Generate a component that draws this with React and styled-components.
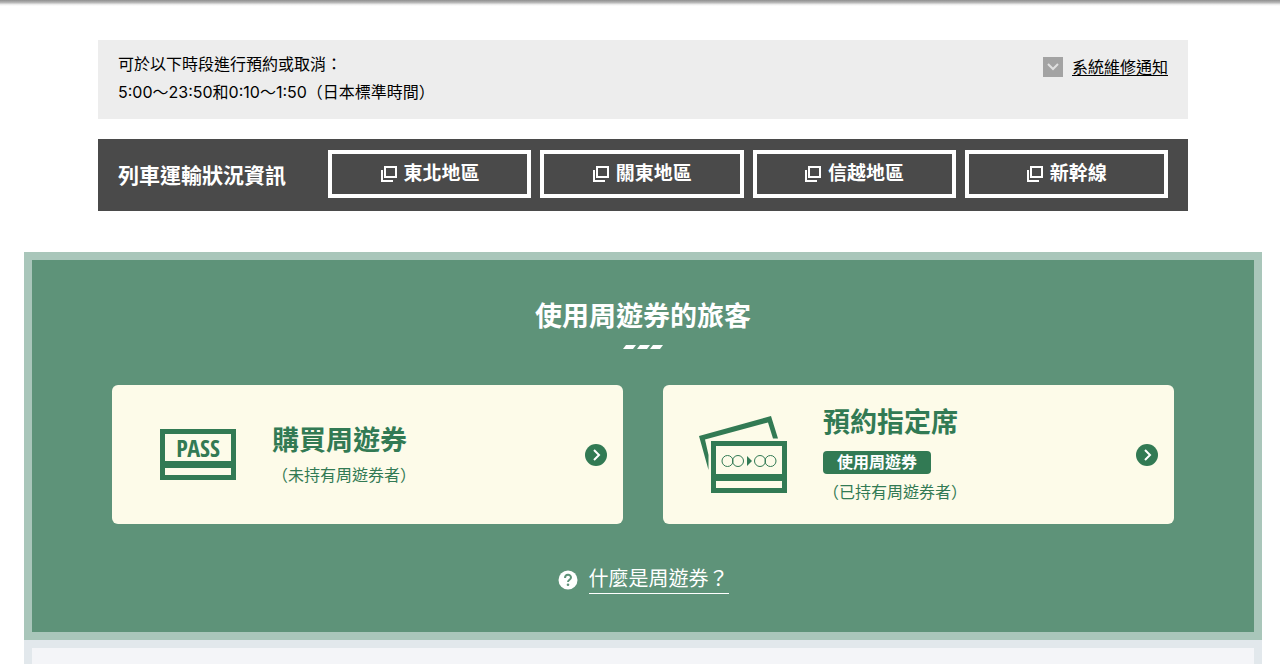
import React from 'react';
import styled, { createGlobalStyle } from 'styled-components';

const GlobalStyle = createGlobalStyle`
    * {
        box-sizing: border-box;
    }

    body {
        margin: 0;
        background: #fff;
        color: #000;
        font-family: Inter, "Noto Sans CJK TC", sans-serif;
        font-size: 16px;
        line-height: 28px;
    }

    h2, h3, p, ul {
        margin: 0;
        padding: 0;
    }

    a {
        color: inherit;
    }
`;

const HeaderShadow = styled.header`
    height: 6px;
    background: linear-gradient(#8f8f8f, #b4b4b4 40%, #ececec 75%, #fff);
`;

const Page = styled.main`
    height: calc(100vh - 6px);
    padding: 34px 18px 0 24px;
    overflow: hidden;
`;

const Notices = styled.div`
    display: flex;
    flex-direction: column;
    gap: 20px;
    max-width: 1090px;
    margin: 0 auto 41px;
`;

const HoursBox = styled.section`
    display: flex;
    justify-content: space-between;
    align-items: flex-start;
    padding: 10px 20px 13px;
    background: #ededed;
`;

const MaintenanceLink = styled.a`
    display: flex;
    align-items: center;
    gap: 9px;
    padding-top: 3px;
    text-underline-offset: 2px;
`;

const ArrowBox = styled.span`
    display: flex;
    align-items: center;
    justify-content: center;
    width: 20px;
    height: 20px;
    background: #a3a3a3;
`;

const StatusBar = styled.section`
    display: flex;
    align-items: center;
    padding: 11px 20px 13px;
    background: #4a4a4a;
    color: #fff;
`;

const StatusTitle = styled.h2`
    flex: 0 0 210px;
    padding-top: 4px;
    font-size: 21px;
    font-weight: 700;
`;

const AreaList = styled.ul`
    display: grid;
    flex: 1;
    grid-template-columns: repeat(4, 1fr);
    gap: 9px;
    list-style: none;
`;

const AreaLink = styled.a`
    display: flex;
    align-items: center;
    justify-content: center;
    gap: 6px;
    height: 48px;
    border: 4px solid #fff;
    font-size: 19px;
    font-weight: 700;
    text-decoration: none;
`;

const PassSection = styled.section`
    display: flex;
    flex-direction: column;
    align-items: center;
    padding: 37px 80px 38px;
    border: 8px solid #a9c6ba;
    background: #5e9379;
    color: #fff;
`;

const PassTitle = styled.h2`
    margin-bottom: 8px;
    font-size: 27px;
    font-weight: 700;
    line-height: 40px;
`;

const Cards = styled.div`
    display: grid;
    grid-template-columns: 1fr 1fr;
    gap: 40px;
    width: 100%;
    margin: 36px 0 41px;
`;

const Card = styled.a`
    display: flex;
    align-items: center;
    min-height: 139px;
    padding: 0 16px 0 36px;
    border-radius: 6px;
    background: #fdfbe9;
    color: #327a54;
    text-decoration: none;
`;

const CardText = styled.div`
    flex: 1;
    margin-left: 36px;
`;

const CardTitle = styled.h3`
    font-size: 27px;
    font-weight: 700;
    line-height: 40px;
`;

const CardBadge = styled.span`
    display: block;
    width: max-content;
    margin: 8px 0 4px;
    padding: 0 14px;
    border-radius: 4px;
    background: #327a54;
    color: #fff;
    font-weight: 700;
    line-height: 23px;
`;

const HelpLink = styled.a`
    display: flex;
    align-items: center;
    gap: 11px;
    font-size: 20px;
    text-decoration: none;
`;

const HelpText = styled.span`
    border-bottom: 1px solid #fff;
`;

const NextSection = styled.section`
    height: 200px;
    border: 8px solid #e2e8ec;
    background: #f4f5f8;
`;

const WindowIcon = () => (
    <svg width="18" height="18" viewBox="0 0 18 18" fill="none" stroke="#fff" strokeWidth="2" aria-hidden="true">
        <path d="M5 2H16V12H5Z" />
        <path d="M2 5V16H13" />
    </svg>
);

const Slashes = () => (
    <svg width="40" height="4" viewBox="0 0 40 4" fill="#fff" aria-hidden="true">
        <path d="M3 0H13L10 4H0ZM17 0H27L24 4H14ZM30 0H40L37 4H27Z" />
    </svg>
);

const CircleArrow = () => (
    <svg width="22" height="22" viewBox="0 0 22 22" aria-hidden="true">
        <circle cx="11" cy="11" r="11" fill="#327a54" />
        <path d="M9 6L14 11L9 16" fill="none" stroke="#fff" strokeWidth="2" />
    </svg>
);

const PassIcon = () => (
    <svg width="88" height="51" viewBox="0 0 88 51" aria-hidden="true">
        <path fill="#327a54" fillRule="evenodd" d="M12 0H88V51H12ZM17 5V32H83V5ZM17 39V46H83V39Z" />
        <text
            x="50"
            y="28"
            fill="#327a54"
            fontFamily="'Open Sans Condensed', 'Roboto Condensed', 'Liberation Sans Narrow', sans-serif"
            fontSize="24"
            fontWeight="500"
            textAnchor="middle"
        >
            PASS
        </text>
    </svg>
);

const TicketsIcon = () => (
    <svg width="88" height="78" viewBox="0 0 88 78" fill="none" stroke="#327a54" aria-hidden="true">
        <path d="M0 20L72 0L79 22.5H74L69 6.5L6 23.5L9.5 39V54Z" fill="#327a54" stroke="none" />
        <path fill="#327a54" stroke="none" fillRule="evenodd" d="M12 25H88V77H12ZM17 30V58H83V30ZM17 65V72H83V65Z" />
        <circle cx="28.5" cy="45" r="5.5" />
        <circle cx="39" cy="45" r="5.5" />
        <circle cx="61" cy="45" r="5.5" />
        <circle cx="71.5" cy="45" r="5.5" />
        <path d="M48 40V50L53 45Z" fill="#327a54" stroke="none" />
    </svg>
);

const HelpIcon = () => (
    <svg width="20" height="20" viewBox="0 0 20 20" aria-hidden="true">
        <circle cx="10" cy="10" r="9.5" fill="#fff" />
        <path d="M7 8C7 3.8 13 3.8 13 7.5C13 9.8 10 9.8 10 12" fill="none" stroke="#5e9379" strokeWidth="2" />
        <circle cx="10" cy="14.7" r="1.3" fill="#5e9379" />
    </svg>
);

const areas = ['東北地區', '關東地區', '信越地區', '新幹線'];

const App = () => (
    <>
        <GlobalStyle />
        <HeaderShadow />
        <Page>
            <Notices>
                <HoursBox>
                    <div>
                        <p>可於以下時段進行預約或取消：</p>
                        <p>5:00～23:50和0:10～1:50（日本標準時間）</p>
                    </div>
                    <MaintenanceLink href="#maintenance">
                        <ArrowBox>
                            <svg width="12" height="8" viewBox="0 0 12 8" fill="none" stroke="#e0e0e0" strokeWidth="2" aria-hidden="true">
                                <path d="M1 1L6 6L11 1" />
                            </svg>
                        </ArrowBox>
                        系統維修通知
                    </MaintenanceLink>
                </HoursBox>
                <StatusBar>
                    <StatusTitle>列車運輸狀況資訊</StatusTitle>
                    <AreaList>
                        {areas.map((area) => (
                            <li key={area}>
                                <AreaLink href="#status">
                                    <WindowIcon />
                                    {area}
                                </AreaLink>
                            </li>
                        ))}
                    </AreaList>
                </StatusBar>
            </Notices>
            <PassSection>
                <PassTitle>使用周遊券的旅客</PassTitle>
                <Slashes />
                <Cards>
                    <Card href="#buy">
                        <PassIcon />
                        <CardText>
                            <CardTitle>購買周遊券</CardTitle>
                            <p>（未持有周遊券者）</p>
                        </CardText>
                        <CircleArrow />
                    </Card>
                    <Card href="#reserve">
                        <TicketsIcon />
                        <CardText>
                            <CardTitle>預約指定席</CardTitle>
                            <CardBadge>使用周遊券</CardBadge>
                            <p>（已持有周遊券者）</p>
                        </CardText>
                        <CircleArrow />
                    </Card>
                </Cards>
                <HelpLink href="#about">
                    <HelpIcon />
                    <HelpText>什麼是周遊券？</HelpText>
                </HelpLink>
            </PassSection>
            <NextSection />
        </Page>
    </>
);

export default App;
